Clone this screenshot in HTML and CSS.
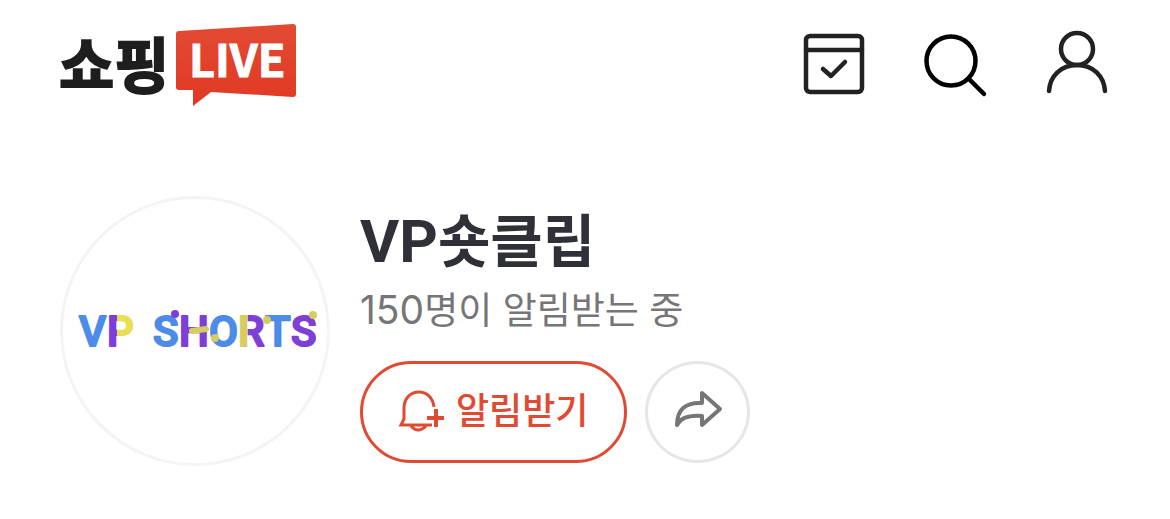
FILE: index.html
```html
<!DOCTYPE html>
<html lang="ko">

<head>
    <meta charset="UTF-8">
    <meta name="viewport" content="width=device-width, initial-scale=1.0">
    <title>VP숏클립 - 쇼핑LIVE</title>
    <link rel="stylesheet" href="styles.css">
</head>

<body>
    <header class="header">
        <a href="#" class="logo" aria-label="쇼핑LIVE">
            <svg width="237" height="82" viewBox="0 0 237 82">
                <defs>
                    <linearGradient id="live-bg" x1="0" y1="0" x2="0" y2="1">
                        <stop offset="0" stop-color="#e24a33" />
                        <stop offset="1" stop-color="#e03924" />
                    </linearGradient>
                </defs>
                <text class="logo-ko" x="-1" y="64">쇼핑</text>
                <path fill="url(#live-bg)" d="M119 7L233 0Q236 0 236 3V70Q236 73 233 73L151 68L133 82V66L119 66Q116 66 116 63V10Q116 7 119 7Z" />
                <text class="logo-live" x="129" y="53">LIVE</text>
            </svg>
        </a>
        <nav class="nav">
            <button type="button" class="btn-nav" aria-label="캘린더">
                <svg class="icon" viewBox="0 0 60 60" stroke-width="4.500">
                    <rect x="3" y="2" width="56" height="56" rx="4" />
                    <path d="M3 16H59M20 35L28 42L42 28" />
                </svg>
            </button>
            <button type="button" class="btn-nav btn-search" aria-label="검색">
                <svg class="icon" viewBox="0 0 60 60" stroke-width="4.500">
                    <circle cx="26" cy="27" r="24.500" />
                    <path d="M43.500 44.500L59 60" />
                </svg>
            </button>
            <button type="button" class="btn-nav" aria-label="마이페이지">
                <svg class="icon" viewBox="0 0 60 60" stroke-width="4.500">
                    <circle cx="30" cy="15" r="16" />
                    <path d="M2 57C3 42 14 31 30 31S57 42 58 57" />
                </svg>
            </button>
        </nav>
    </header>

    <main class="profile">
        <a href="#" class="avatar" aria-label="VP SHORTS">
            <svg viewBox="0 0 264 264">
                <defs>
                    <linearGradient id="fill-p">
                        <stop offset="0.38" stop-color="#7d3fdc" />
                        <stop offset="0.38" stop-color="#e8df52" />
                    </linearGradient>
                    <linearGradient id="fill-r">
                        <stop offset="0.38" stop-color="#d6cc62" />
                        <stop offset="0.38" stop-color="#7d3fd6" />
                    </linearGradient>
                </defs>
                <g class="avatar-text">
                    <text class="blue" x="16" y="147">V</text>
                    <text fill="url(#fill-p)" stroke="url(#fill-p)" x="44" y="147">P</text>
                    <text class="blue" x="90" y="147">S</text>
                    <text class="purple" x="116" y="147">H</text>
                    <text class="blue" x="146" y="147">O</text>
                    <text fill="url(#fill-r)" stroke="url(#fill-r)" x="175" y="147">R</text>
                    <text class="blue" x="202" y="147">T</text>
                    <text class="purple" x="228" y="147">S</text>
                </g>
                <path class="bar" d="M129 132L143 130" />
                <g class="dots">
                    <circle class="purple" cx="112" cy="115" r="4" />
                    <circle cx="152" cy="139" r="4" />
                    <circle cx="204" cy="121" r="4" />
                    <circle cx="250" cy="116" r="4" />
                </g>
            </svg>
        </a>
        <div class="info">
            <h1 class="name"><span>VP</span>숏클립</h1>
            <p class="count"><span>150</span>명이 알림받는 중</p>
            <div class="btn-wrapper">
                <button type="button" class="btn-alarm">
                    <svg class="icon-bell" width="46" height="44" viewBox="0 0 46 44">
                        <path d="M35 17C34 8 28 2 20 2C11 2 5 9 5 18V29L2 35H33M12 36Q19 44 27 36" />
                        <path stroke-width="4" d="M37 19V37M28 28H45" />
                    </svg>
                    <span>알림받기</span>
                </button>
                <button type="button" class="btn-share" aria-label="공유하기">
                    <svg class="icon-share" width="48" height="38" viewBox="0 0 48 38">
                        <path d="M28 2L46 18L28 34V25C16 24 7 26 3 34C3 19 11 11 28 12Z" />
                    </svg>
                </button>
            </div>
        </div>
    </main>
</body>

</html>
```
FILE: styles.css
```css
* {
    padding: 0;
    margin: 0;
    box-sizing: border-box;
}

body {
    background: #fff;
    font-family: 'Noto Sans CJK KR', sans-serif;
}

button {
    background: none;
    border: none;
    font-family: inherit;
    cursor: pointer;
}

svg {
    display: block;
    overflow: visible;
}

.header {
    display: flex;
    justify-content: space-between;
    align-items: flex-start;
    padding: 24px 63px 0 60px;
}

.logo-ko {
    font-size: 60px;
    font-weight: 700;
    fill: #1e1e1e;
    stroke: #1e1e1e;
    stroke-width: 2px;
}

.logo-live {
    font-size: 45px;
    font-weight: 700;
    fill: #fff;
    stroke: #fff;
    stroke-width: 1px;
}

.nav {
    display: flex;
    gap: 62px;
    padding-top: 10px;
}

.icon {
    width: 60px;
    height: 60px;
    fill: none;
    stroke: #222;
    stroke-linecap: round;
    stroke-linejoin: round;
}

.btn-search .icon {
    stroke: #000;
}

.profile {
    display: flex;
    gap: 30px;
    padding: 90px 60px 48px;
}

.avatar {
    flex: none;
    width: 270px;
    height: 270px;
    border: 3px solid #f4f4f5;
    border-radius: 50%;
}

.avatar-text {
    font-family: Roboto, sans-serif;
    font-size: 42px;
    font-weight: 500;
    stroke-width: 2px;
    stroke-linejoin: round;
}

.blue {
    fill: #4c8be8;
    stroke: #4c8be8;
}

.dots {
    fill: #d6cc62;
}

.purple {
    fill: #7d3fd6;
}

.avatar-text .purple {
    stroke: #7d3fd6;
}

.bar {
    stroke: #d6cc62;
    stroke-width: 6px;
    stroke-linecap: round;
}

.info {
    padding-top: 7px;
}

.name {
    font-size: 57px;
    line-height: 68px;
    font-weight: 700;
    color: #303038;
}

.name span {
    font-family: Roboto, sans-serif;
    font-size: 60px;
}

.count {
    margin-top: 10px;
    font-size: 37px;
    line-height: 44px;
    font-weight: 400;
    color: #767678;
}

.count span {
    font-family: Inter, sans-serif;
    font-size: 39px;
}

.btn-wrapper {
    display: flex;
    gap: 18px;
    margin-top: 29px;
}

.btn-alarm {
    display: flex;
    align-items: center;
    gap: 11px;
    height: 102px;
    padding: 0 36px;
    border: 3px solid #e14a32;
    border-radius: 51px;
    color: #e14a32;
    font-size: 36px;
    line-height: 44px;
    font-weight: 500;
}

.btn-alarm span {
    padding-bottom: 8px;
}

.btn-share {
    display: grid;
    place-items: center;
    width: 105px;
    height: 102px;
    padding-bottom: 4px;
    border: 3px solid #e5e5ea;
    border-radius: 50%;
}

.icon-bell {
    fill: none;
    stroke: #e14a32;
    stroke-width: 3px;
}

.icon-bell path + path {
    stroke-width: 4px;
}

.icon-share {
    fill: none;
    stroke: #767678;
    stroke-width: 4px;
    stroke-linejoin: round;
}
```
